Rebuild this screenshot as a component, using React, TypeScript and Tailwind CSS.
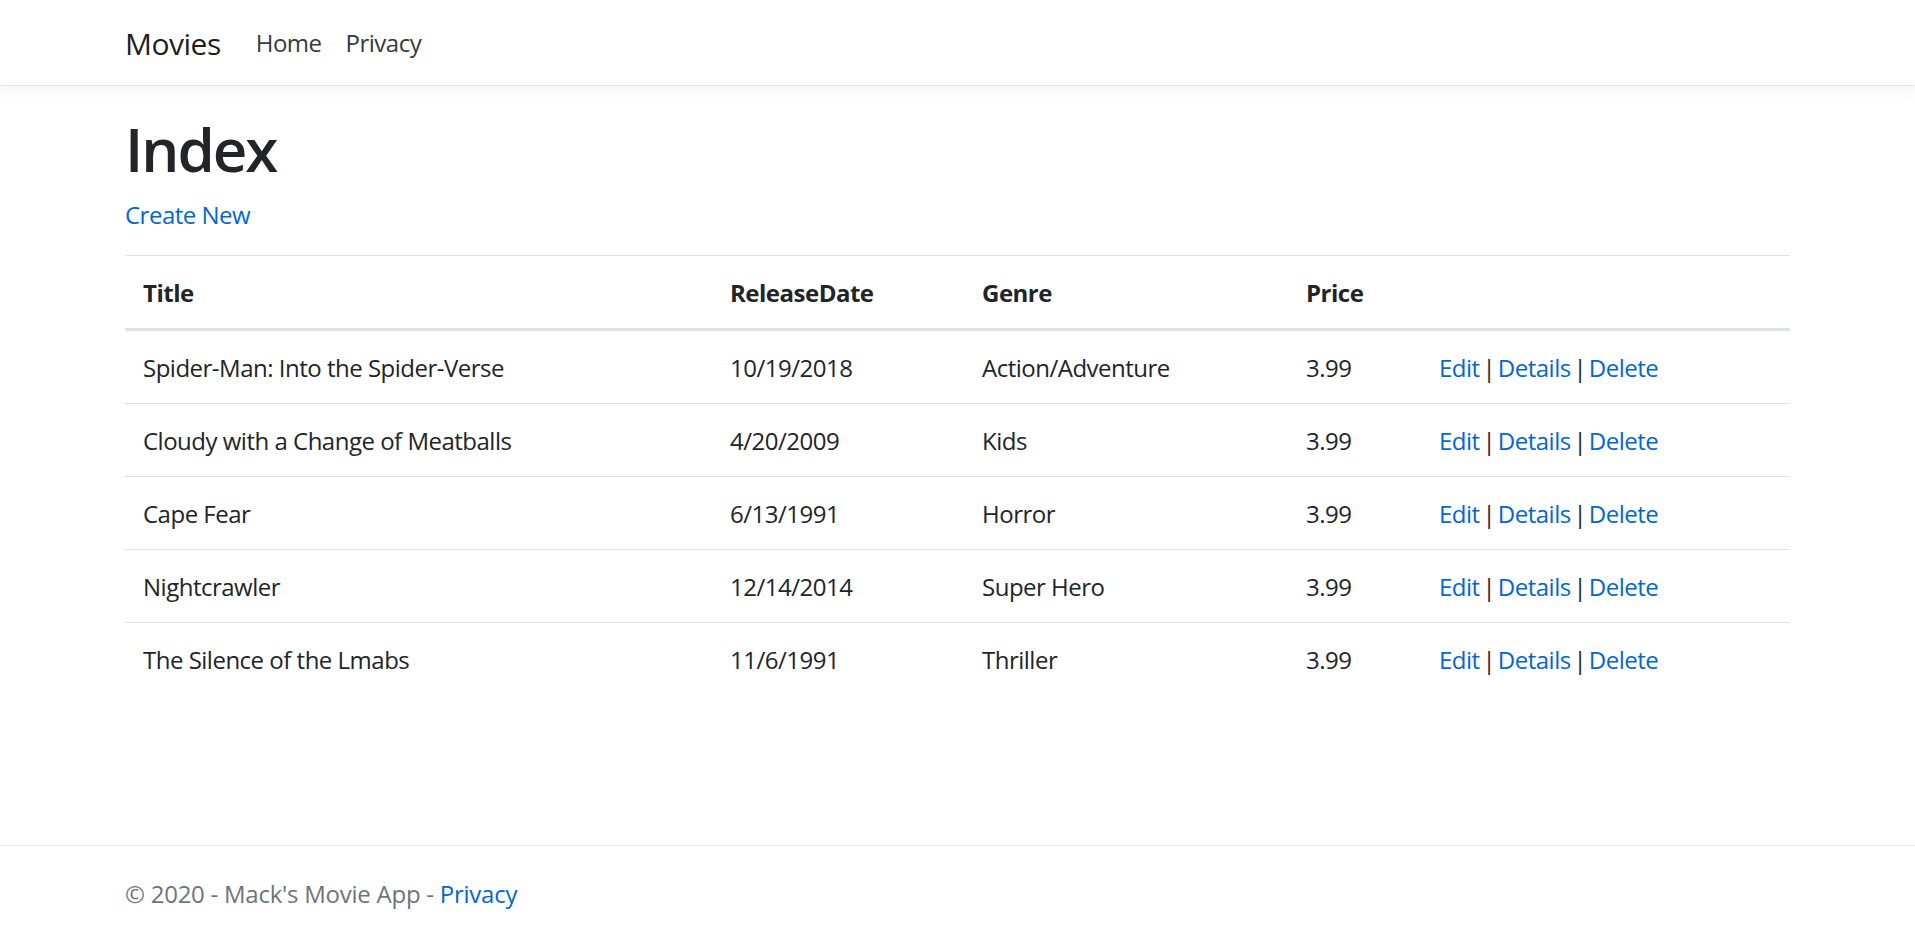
import React from 'react';

const movies = [
  { title: 'Spider-Man: Into the Spider-Verse', date: '10/19/2018', genre: 'Action/Adventure', price: '3.99' },
  { title: 'Cloudy with a Change of Meatballs', date: '4/20/2009', genre: 'Kids', price: '3.99' },
  { title: 'Cape Fear', date: '6/13/1991', genre: 'Horror', price: '3.99' },
  { title: 'Nightcrawler', date: '12/14/2014', genre: 'Super Hero', price: '3.99' },
  { title: 'The Silence of the Lmabs', date: '11/6/1991', genre: 'Thriller', price: '3.99' },
];

const Container: React.FC<{ children: React.ReactNode; className?: string }> = ({ children, className = '' }) => (
  <div className={`mx-auto w-full max-w-[1710px] px-[22.5px] ${className}`}>{children}</div>
);

export default function App() {
  return (
    <div className="relative min-h-[935px] bg-white font-['Segoe_UI','Open_Sans',sans-serif] text-[24px] leading-[36px] tracking-[-0.5px] text-[#212529]">
      {/* Navbar */}
      <header className="border-b border-[#e5e5e5] bg-white shadow-[0_6px_18px_rgba(0,0,0,0.05)]">
        <Container className="flex items-center py-[12px]">
          <a className="mr-[23px] pt-[8.5px] pb-[6.5px] text-[30px] leading-[45px] text-black/90">Movies</a>
          <nav className="flex pt-[1px]">
            <a className="px-[12px] py-[12px] text-[#343a40]">Home</a>
            <a className="px-[12px] py-[12px] text-[#343a40]">Privacy</a>
          </nav>
        </Container>
      </header>

      {/* Main */}
      <Container className="mt-[25px] pb-[24px]">
        <h1 className="mb-[12px] pt-[2px] text-[60px] leading-[72px] font-semibold tracking-[-2px]">Index</h1>
        <p className="mb-[22px]">
          <a className="text-[#0366d6]">Create New</a>
        </p>

        <table className="w-full table-fixed border-collapse text-left">
          <thead>
            <tr>
              <th className="w-[587px] border-t border-b-[3px] border-t-[#dee2e6] border-b-[#dee2e6] px-[18px] pt-[19px] pb-[17px] font-bold">Title</th>
              <th className="w-[252px] border-t border-b-[3px] border-t-[#dee2e6] border-b-[#dee2e6] px-[18px] pt-[19px] pb-[17px] font-bold">ReleaseDate</th>
              <th className="w-[324px] border-t border-b-[3px] border-t-[#dee2e6] border-b-[#dee2e6] px-[18px] pt-[19px] pb-[17px] font-bold">Genre</th>
              <th className="w-[133px] border-t border-b-[3px] border-t-[#dee2e6] border-b-[#dee2e6] px-[18px] pt-[19px] pb-[17px] font-bold">Price</th>
              <th className="border-t border-b-[3px] border-t-[#dee2e6] border-b-[#dee2e6] px-[18px] pt-[19px] pb-[17px]"></th>
            </tr>
          </thead>
          <tbody>
            {movies.map((m, i) => (
              <tr key={i} className={i > 0 ? 'border-t border-[#dee2e6]' : ''}>
                <td className="px-[18px] pt-[19px] pb-[17px]">{m.title}</td>
                <td className="px-[18px] pt-[19px] pb-[17px]">{m.date}</td>
                <td className="px-[18px] pt-[19px] pb-[17px]">{m.genre}</td>
                <td className="px-[18px] pt-[19px] pb-[17px]">{m.price}</td>
                <td className="px-[18px] pt-[19px] pb-[17px] [word-spacing:-3px]">
                  <a className="text-[#0366d6]">Edit</a> | <a className="text-[#0366d6]">Details</a> |{' '}
                  <a className="text-[#0366d6]">Delete</a>
                </td>
              </tr>
            ))}
          </tbody>
        </table>
      </Container>

      {/* Footer */}
      <footer className="absolute bottom-0 w-full border-t border-[#e5e5e5] pt-[6px] leading-[83px] tracking-[-0.25px] whitespace-nowrap text-[#6c757d]">
        <Container>
          © 2020 - Mack's Movie App - <a className="text-[#0366d6]">Privacy</a>
        </Container>
      </footer>
    </div>
  );
}
